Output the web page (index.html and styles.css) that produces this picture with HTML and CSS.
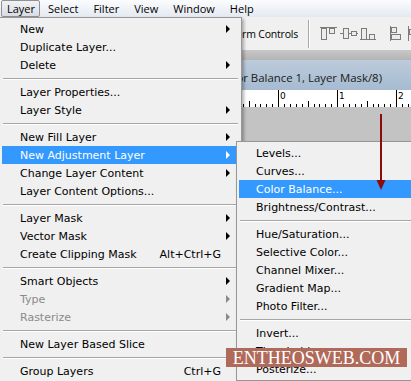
FILE: index.html
```html
<html>
<head>
<title>Layer menu</title>
<link rel="stylesheet" href="styles.css">
</head>
<body>

<div class="menubar">
<span class="mb-item open">Layer</span>
<span class="mb-item">Select</span>
<span class="mb-item">Filter</span>
<span class="mb-item">View</span>
<span class="mb-item">Window</span>
<span class="mb-item">Help</span>
</div>

<div class="app">
<div class="options">
<span class="opt-label">Show Transform Controls</span>
<span class="vsep"></span>
<svg class="align-icons" width="91" height="16" viewBox="0 0 91 16">
<g fill="#ececec" stroke="#7c7c7c" stroke-width="1">
<path d="M0 1.5H17" fill="none"/>
<rect x="1.5" y="2.5" width="5" height="11"/>
<rect x="9.5" y="2.5" width="5" height="5"/>
<path d="M20 7.5H38" fill="none"/>
<rect x="23.5" y="2.5" width="5" height="10"/>
<rect x="31.5" y="5.5" width="5" height="4"/>
<path d="M40 13.5H56" fill="none"/>
<rect x="41.5" y="2.5" width="5" height="11"/>
<rect x="49.5" y="8.5" width="5" height="5"/>
<path d="M70.5 0V15" fill="none"/>
<rect x="71.5" y="1.5" width="5" height="5"/>
<rect x="71.5" y="8.5" width="9" height="5"/>
<path d="M88.5 0V15" fill="none"/>
<rect x="89.5" y="3.5" width="5" height="5"/>
</g>
</svg>
</div>
<div class="band"></div>
<div class="doc-title"><span class="doc-name">Untitled-1 @ 100% (Color Balance 1, Layer Mask/8)</span></div>
<svg class="ruler" width="411" height="17" viewBox="0 0 411 17">
<defs>
<pattern id="ticks" x="278" y="0" width="59" height="17" patternUnits="userSpaceOnUse">
<path d="M0.5 0V17M6.5 14V17M12.5 14V17M18.5 14V17M24.5 14V17M30.5 11V17M36.5 14V17M41.5 14V17M47.5 14V17M53.5 14V17" stroke="#000" stroke-width="1"/>
</pattern>
</defs>
<rect width="411" height="17" fill="#fff"/>
<rect width="411" height="17" fill="url(#ticks)"/>
<text x="280" y="9">0</text>
<text x="339" y="9">1</text>
<text x="398" y="9">2</text>
</svg>
<div class="canvas"></div>
</div>

<div class="menu main-menu">
<div class="item">New<i class="arr"></i></div>
<div class="item">Duplicate Layer...</div>
<div class="item">Delete<i class="arr"></i></div>
<div class="sep"></div>
<div class="item">Layer Properties...</div>
<div class="item">Layer Style<i class="arr"></i></div>
<div class="sep"></div>
<div class="item">New Fill Layer<i class="arr"></i></div>
<div class="item active">New Adjustment Layer<i class="arr"></i></div>
<div class="item">Change Layer Content<i class="arr"></i></div>
<div class="item">Layer Content Options...</div>
<div class="sep"></div>
<div class="item">Layer Mask<i class="arr"></i></div>
<div class="item">Vector Mask<i class="arr"></i></div>
<div class="item">Create Clipping Mask<span class="key">Alt+Ctrl+G</span></div>
<div class="sep"></div>
<div class="item">Smart Objects<i class="arr"></i></div>
<div class="item disabled">Type<i class="arr"></i></div>
<div class="item disabled">Rasterize<i class="arr"></i></div>
<div class="sep"></div>
<div class="item">New Layer Based Slice</div>
<div class="sep"></div>
<div class="item">Group Layers<span class="key">Ctrl+G</span></div>
</div>

<div class="menu submenu">
<div class="item">Levels...</div>
<div class="item">Curves...</div>
<div class="item active">Color Balance...</div>
<div class="item">Brightness/Contrast...</div>
<div class="sep"></div>
<div class="item">Hue/Saturation...</div>
<div class="item">Selective Color...</div>
<div class="item">Channel Mixer...</div>
<div class="item">Gradient Map...</div>
<div class="item">Photo Filter...</div>
<div class="sep"></div>
<div class="item">Invert...</div>
<div class="item">Threshold...</div>
<div class="item">Posterize...</div>
</div>

<svg class="red-arrow" width="12" height="80" viewBox="0 0 12 80">
<path d="M6 0V68" stroke="#8e0b0b" stroke-width="2"/>
<polygon points="1.5,66 10.5,66 6,76" fill="#8e0b0b"/>
</svg>

<div class="watermark">ENTHEOSWEB.COM</div>

</body>
</html>
```

FILE: styles.css
```css
body{
margin: 0;
width: 411px;
height: 381px;
overflow: hidden;
position: relative;
font-family: "DejaVu Sans", sans-serif;
font-size: 11px;
color: #000;
background-color: #c3c3c3;
}
.menubar{
height: 17px;
display: flex;
padding-left: 1px;
background: linear-gradient(#fbfcfe, #e4e9f1);
font-family: "Open Sans", "DejaVu Sans", sans-serif;
font-size: 11px;
}
.mb-item{
padding: 0 6px 0 5px;
margin-right: 2px;
line-height: 15px;
border: 1px solid transparent;
}
.mb-item.open{
padding-right: 4px;
border-color: #8f9194;
border-radius: 2px;
background: linear-gradient(#f1f2f4, #d9dde3);
}
.app{
display: flex;
flex-direction: column;
}
.options{
height: 33px;
display: flex;
align-items: center;
background-color: #f0f0f0;
}
.opt-label{
width: 298px;
text-align: right;
white-space: nowrap;
font-family: "Open Sans", "DejaVu Sans", sans-serif;
font-size: 10.5px;
letter-spacing: -0.2px;
}
.vsep{
width: 1px;
height: 28px;
margin-left: 10px;
background-color: #a9a9a9;
border-right: 1px solid #fff;
}
.align-icons{
margin-left: 10px;
}
.band{
height: 10px;
background: linear-gradient(#c8c8c8, #b4b4b4);
}
.doc-title{
height: 30px;
display: flex;
align-items: center;
padding-top: 4px;
box-sizing: border-box;
background: linear-gradient(#bccbdb, #a6bbd1);
}
.doc-name{
width: 382px;
text-align: right;
white-space: nowrap;
font-family: "Open Sans", "DejaVu Sans", sans-serif;
font-size: 11.4px;
color: #1a1a1a;
}
.ruler{
display: block;
}
.ruler text{
font-family: "DejaVu Sans", sans-serif;
font-size: 9px;
fill: #000;
}
.canvas{
height: 274px;
background-color: #c3c3c3;
}
.menu{
position: absolute;
background-color: #f0f0f0;
border: 1px solid #979797;
box-sizing: border-box;
}
.main-menu{
left: -1px;
top: 17px;
width: 243px;
padding: 2px 2px;
box-shadow: 2px 2px 3px rgba(0, 0, 0, 0.3);
}
.submenu{
left: 236px;
top: 141px;
width: 200px;
padding: 2px 2px;
box-shadow: 2px 2px 3px rgba(0, 0, 0, 0.3);
}
.item{
height: 18px;
display: flex;
align-items: center;
padding: 0 18px 0 17px;
white-space: nowrap;
}
.main-menu .item{
padding-left: 18px;
}
.item.active{
background-color: #3399ff;
color: #fff;
}
.item.disabled{
color: #8a8a8a;
}
.arr{
margin-left: auto;
margin-right: -9px;
width: 0;
height: 0;
border-left: 4px solid #000;
border-top: 4px solid transparent;
border-bottom: 4px solid transparent;
}
.active .arr{
border-left-color: #fff;
}
.disabled .arr{
border-left-color: #8a8a8a;
}
.key{
margin-left: auto;
}
.sep{
height: 1px;
margin: 4px 1px 3px;
background-color: #a6a6a6;
border-bottom: 1px solid #fff;
}
.red-arrow{
position: absolute;
left: 375px;
top: 114px;
}
.watermark{
position: absolute;
left: 226px;
top: 348px;
width: 181px;
height: 19px;
background-color: #b06a5a;
color: #fff;
font-family: "Liberation Serif", serif;
font-size: 18px;
line-height: 20px;
text-align: center;
}
```
